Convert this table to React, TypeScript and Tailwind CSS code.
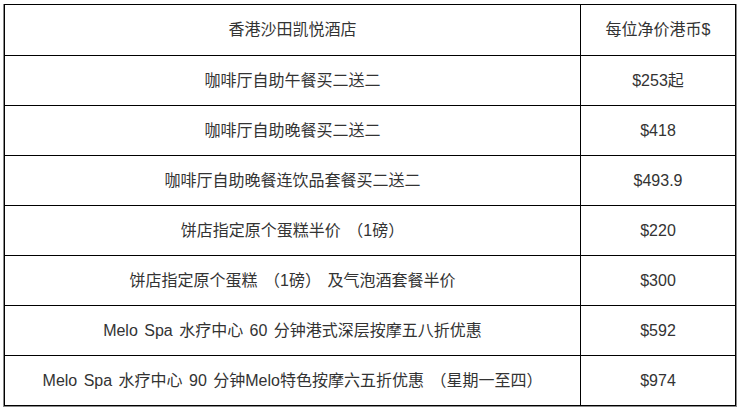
const rows: [string, string][] = [
  ["咖啡厅自助午餐买二送二", "$253起"],
  ["咖啡厅自助晚餐买二送二", "$418"],
  ["咖啡厅自助晚餐连饮品套餐买二送二", "$493.9"],
  ["饼店指定原个蛋糕半价 （1磅）", "$220"],
  ["饼店指定原个蛋糕 （1磅） 及气泡酒套餐半价", "$300"],
  ["Melo Spa 水疗中心 60 分钟港式深层按摩五八折优惠", "$592"],
  ["Melo Spa 水疗中心 90 分钟Melo特色按摩六五折优惠 （星期一至四）", "$974"],
];

export default function App() {
  return (
    <div className="min-h-screen bg-white pt-[4px] pl-[3px] font-['Liberation_Sans','Noto_Sans_CJK_SC',sans-serif] text-[16px] text-[#333] [word-spacing:2px]">
      <div className="w-[734px] border-x border-b border-[#8a8a8a]">
        <div className="border border-black">
          <div className="grid h-[50px] grid-cols-[575px_1px_154px] items-center text-center">
            <div>香港沙田凯悦酒店</div>
            <div className="h-full bg-black" />
            <div>每位净价港币$</div>
          </div>
          {rows.map(([name, price]) => (
            <div
              key={name}
              className="grid h-[50px] grid-cols-[575px_1px_154px] items-center border-t border-black text-center"
            >
              <div>{name}</div>
              <div className="h-full bg-black" />
              <div>{price}</div>
            </div>
          ))}
        </div>
      </div>
    </div>
  );
}
